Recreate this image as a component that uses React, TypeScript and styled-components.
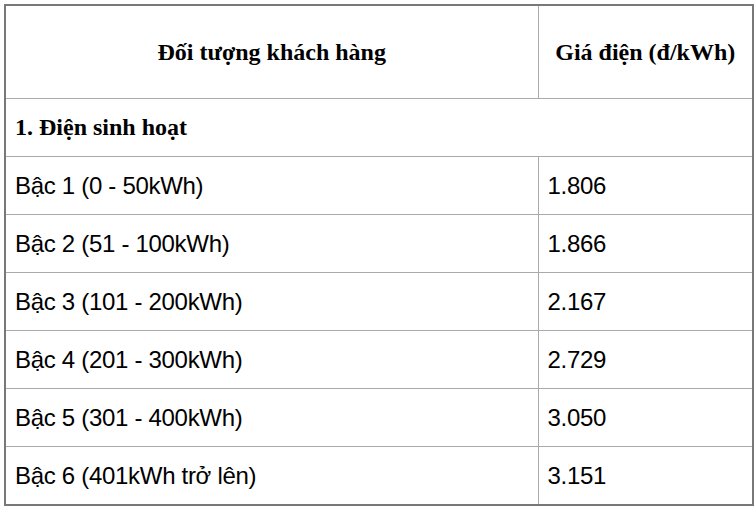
import React from "react";
import styled, { createGlobalStyle } from "styled-components";

const Global = createGlobalStyle`
  html, body { margin: 0; padding: 0; background: #ffffff; }
  body { width: 756px; height: 506px; overflow: hidden; }
`;

const Page = styled.div`
  padding: 4px 0 0 4px;
`;

const Table = styled.table`
  width: 748px;
  border-collapse: collapse;
  border: 2px solid #787878;
  table-layout: fixed;
  color: #000;
`;

const HeadCell = styled.th`
  height: 92px;
  padding: 0 9px;
  border: 1px solid #aaaaaa;
  font-family: "Liberation Serif", "Times New Roman", serif;
  font-weight: 700;
  font-size: 24px;
  text-align: center;
  vertical-align: middle;
`;

const SectionCell = styled.td`
  height: 57px;
  padding: 0 9px;
  border: 1px solid #aaaaaa;
  font-family: "Liberation Serif", "Times New Roman", serif;
  font-weight: 700;
  font-size: 24px;
  text-align: left;
  vertical-align: middle;
`;

const Cell = styled.td`
  height: 57px;
  padding: 0 9px;
  border: 1px solid #aaaaaa;
  font-family: "Liberation Sans", Arial, sans-serif;
  font-size: 24px;
  letter-spacing: -0.3px;
  text-align: left;
  vertical-align: middle;
`;

const rows: [string, string][] = [
  ["Bậc 1 (0 - 50kWh)", "1.806"],
  ["Bậc 2 (51 - 100kWh)", "1.866"],
  ["Bậc 3 (101 - 200kWh)", "2.167"],
  ["Bậc 4 (201 - 300kWh)", "2.729"],
  ["Bậc 5 (301 - 400kWh)", "3.050"],
  ["Bậc 6 (401kWh trở lên)", "3.151"],
];

export default function App() {
  return (
    <>
      <Global />
      <Page>
        <Table>
          <colgroup>
            <col style={{ width: 533 }} />
            <col style={{ width: 215 }} />
          </colgroup>
          <thead>
            <tr>
              <HeadCell>Đối tượng khách hàng</HeadCell>
              <HeadCell>Giá điện (đ/kWh)</HeadCell>
            </tr>
          </thead>
          <tbody>
            <tr>
              <SectionCell colSpan={2}>1. Điện sinh hoạt</SectionCell>
            </tr>
            {rows.map(([label, price]) => (
              <tr key={label}>
                <Cell>{label}</Cell>
                <Cell>{price}</Cell>
              </tr>
            ))}
          </tbody>
        </Table>
      </Page>
    </>
  );
}
